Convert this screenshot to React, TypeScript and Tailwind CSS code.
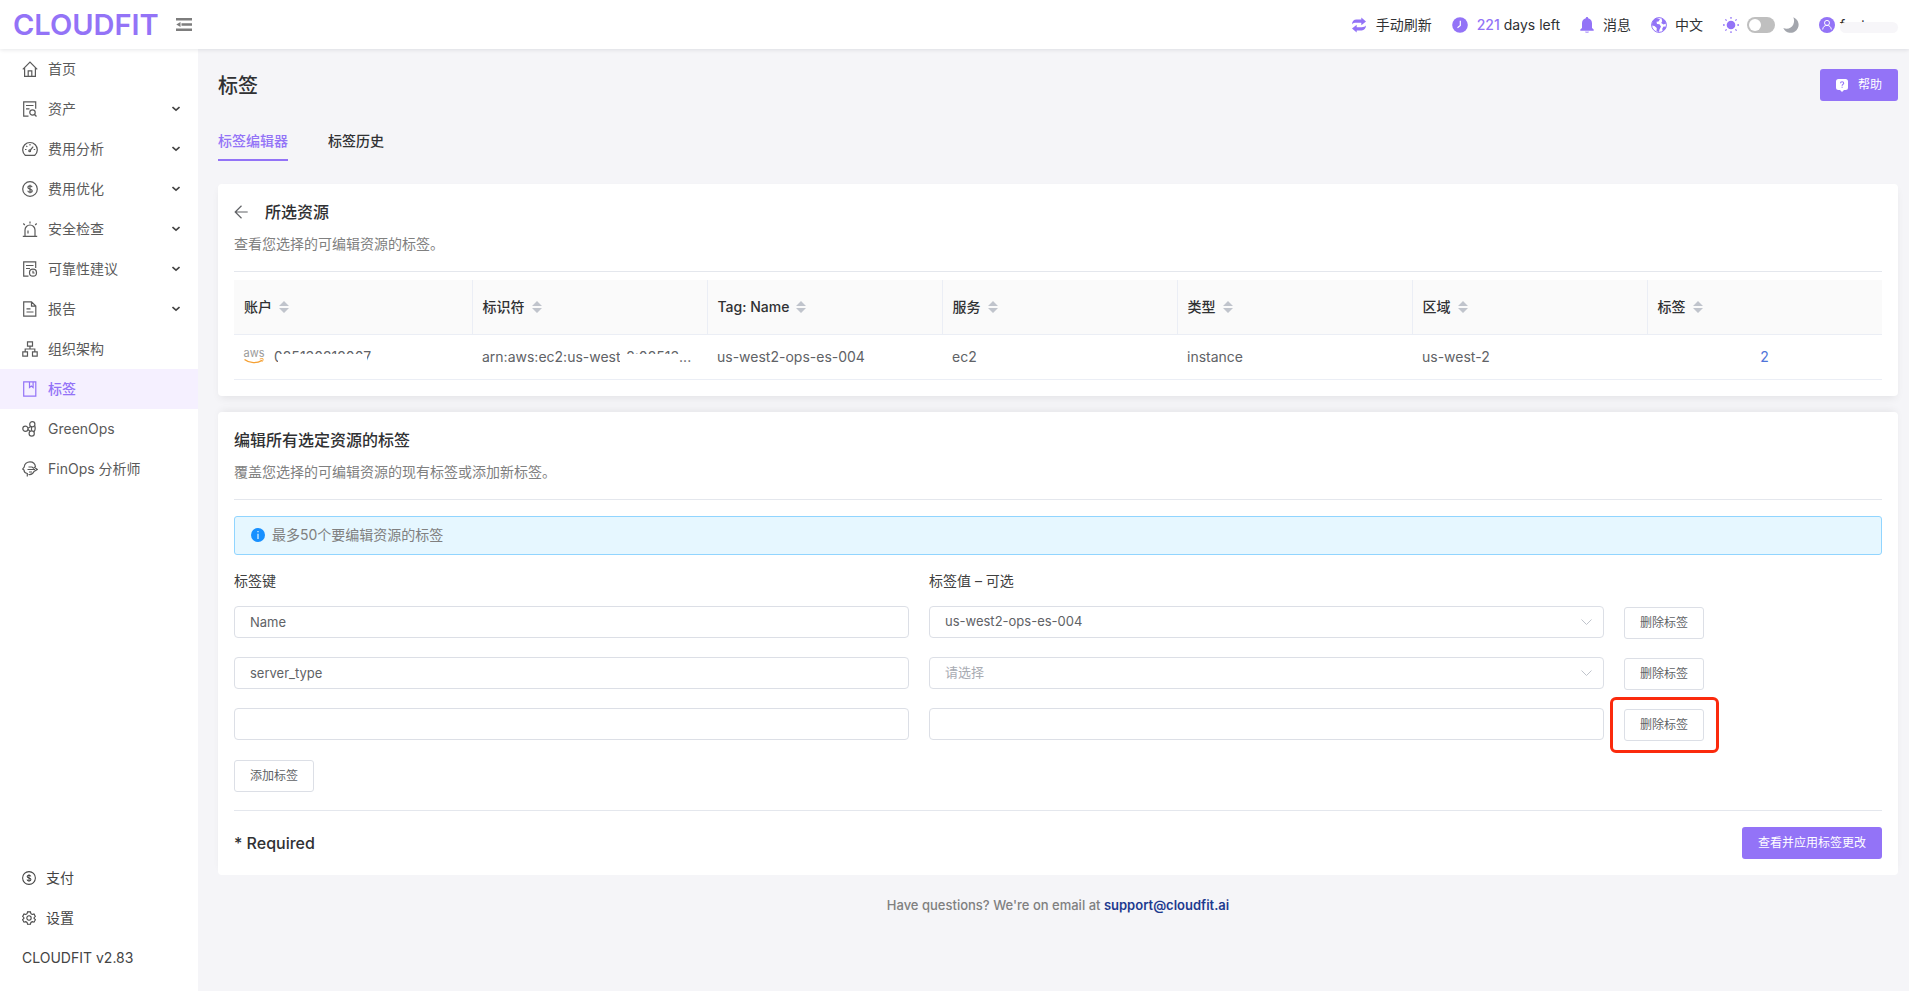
import type { ReactNode } from 'react';

type IconProps = {
  children: ReactNode;
  size?: string;
};

const LineIcon = ({ children, size = 'size-4' }: IconProps) => (
  <svg
    className={`${size} shrink-0`}
    viewBox="0 0 16 16"
    fill="none"
    stroke="currentColor"
    strokeWidth="1.2"
    aria-hidden="true"
  >
    {children}
  </svg>
);

const DollarIcon = ({ size }: { size?: string }) => (
  <LineIcon size={size}>
    <circle cx="8" cy="8" r="7.3" />
    <path d="M10.1 6.2c-.2-.9-1-1.4-2.1-1.4-1.2 0-2.1.6-2.1 1.6 0 2.2 4.3 1.1 4.3 3.3 0 1-.9 1.6-2.2 1.6-1.2 0-2.1-.6-2.2-1.6M8 3.7v8.6" />
  </LineIcon>
);

const HomeIcon = () => (
  <LineIcon>
    <path d="M.8 8.3 8 1l7.2 7.3M2.6 6.8v8.5h10.8V6.8" />
    <path d="M6.2 15.2V9.8h3.6v5.4" />
  </LineIcon>
);

const AssetIcon = () => (
  <LineIcon>
    <path d="M6.5 15.2H1.7V.8h12v7M4 4.5h7.5M4 7.8h3.5" />
    <circle cx="10.5" cy="11.5" r="2.7" />
    <path d="m12.5 13.5 2 2" />
  </LineIcon>
);

const GaugeIcon = () => (
  <LineIcon>
    <path d="M3.2 14.3a7.3 7.3 0 1 1 9.6 0z" />
    <path d="m8.4 9 2.8-3.3M8 3v1.5M3 8.5h1.5M11.7 8.5h1.5M4.3 4.8l1 1" />
    <circle cx="7.7" cy="9.7" r=".9" />
  </LineIcon>
);

const AlarmIcon = () => (
  <LineIcon>
    <path d="M.8 15.3h14.4M3 15V9a5 5 0 0 1 10 0v6M6 12.500V9.500" />
    <path d="M8 .5v2M1.300 2.500 2.800 4M14.700 2.500 13.200 4" />
  </LineIcon>
);

const ReliabilityIcon = () => (
  <LineIcon>
    <path d="M6.500 15.200H1.700V.8h12V7M4 4.500h7.500M4 7.500h4" />
    <circle cx="11" cy="11.700" r="3.500" />
    <path d="M11 9.800v2.200h1.600" />
  </LineIcon>
);

const ReportIcon = () => (
  <LineIcon>
    <path d="M1.700.8h7.800l4.300 4.300v10.100H1.700zM9.500.8v4.300h4.300M4.500 7.800h4M4.500 11h7" />
  </LineIcon>
);

const OrgIcon = () => (
  <LineIcon>
    <path d="M5.500.8h5v4.400h-5zM.8 10.800h4.700v4.400H.8zM10.500 10.800h4.700v4.400h-4.700zM8 5.200V8M3.200 10.800V8h9.600v2.800" />
  </LineIcon>
);

const TagIcon = () => (
  <LineIcon>
    <path d="M1.700.8h12.100v14.400H1.700zM7.500.8v5.700l1.800-1.400 1.800 1.400V.8" />
  </LineIcon>
);

const GreenIcon = () => (
  <LineIcon>
    <circle cx="3.400" cy="7.800" r="2.600" />
    <circle cx="10.300" cy="3.200" r="2.600" />
    <circle cx="9.700" cy="12.500" r="2.600" />
    <path d="M6 7.300 8.700 5.500M6 8.500l2 1.800M12.700 4.500c.8 2.200.7 4.500-.8 6.500M9.500 5.800v4" />
  </LineIcon>
);

const AnalystIcon = () => (
  <LineIcon>
    <path d="M5.300 15.500v-3C3 12 2 10.500 2 9L.7 8l1.500-2C2.500 3 5 .9 8 .9c3.400 0 5.200 2.200 5.500 5.100" />
    <path d="M6.500 13.500c2.500.5 4.500-.8 5.500-3l3.300-2L12 6" />
    <path d="M6.500 6H10l2 1.500M5.500 8.500H13M7 11h3" />
  </LineIcon>
);

const GearIcon = () => (
  <LineIcon size="size-[14px]">
    <path d="m6.300 1-.5 2-1.500.9-2-.6L.7 6.200 2.200 7.600v.9L.7 9.900l1.600 2.900 2-.6 1.500.9.5 2h3.400l.5-2 1.500-.9 2 .6 1.600-2.900-1.500-1.400v-.9l1.500-1.400-1.600-2.900-2 .6-1.500-.9-.5-2z" />
    <circle cx="8" cy="8" r="2.500" />
  </LineIcon>
);

const FoldIcon = () => (
  <svg className="size-4" viewBox="0 0 16 16" fill="#7d7d7d" aria-hidden="true">
    <path d="M0 1h16v2.600H0zM5.500 6.200H16v2.600H5.500zM0 11.400h16V14H0zM.3 7.500 4.500 5v5z" />
  </svg>
);

const RefreshIcon = () => (
  <svg className="size-4" viewBox="0 0 16 16" fill="#9373f7" aria-hidden="true">
    <path d="M1 7.400C1 4.600 3 2.600 5.300 2.600h5V.5L15 4.600 10.300 8.300V5.800h-5C3.500 5.800 2 6.200 1 7.400z" />
    <path d="M15 8.600c0 2.800-2 4.800-4.300 4.800h-5v2.100L1 11.400l4.700-3.700v2.500h5c1.800 0 3.300-.4 4.300-1.600z" />
  </svg>
);

const ClockIcon = () => (
  <svg className="size-4" viewBox="0 0 16 16" aria-hidden="true">
    <circle cx="8" cy="8" r="7.800" fill="#9373f7" />
    <path d="M8.300 3.800v4.700l-2.800 2.200" fill="none" stroke="#fff" strokeWidth="1.200" />
  </svg>
);

const BellIcon = () => (
  <svg className="h-[18px] w-[14px]" viewBox="0 0 14 16" aria-hidden="true">
    <path
      d="M7 0c.7 0 1.200.5 1.200 1.200 2.400.6 3.800 2.600 3.800 5V11l1.700 1.500v1.200H.3v-1.200L2 11V6.200c0-2.400 1.400-4.400 3.800-5C5.800.5 6.300 0 7 0z"
      fill="#9373f7"
    />
    <path d="M5 14.500h4a2 1.500 0 0 1-4 0z" fill="#b9a5fb" />
  </svg>
);

const GlobeIcon = () => (
  <svg className="size-4" viewBox="0 0 16 16" aria-hidden="true">
    <circle cx="8" cy="8" r="7.400" fill="#fff" stroke="#9373f7" />
    <path
      d="M5.500 1 9 2.200 7.500 4.500l-2 .3L6 7l2.500.3L10 9.500l-1.500 3L8 15 5.500 14l.3-3L3.500 9 1 8.500C.8 5 2.500 2 5.500 1zM10.500 1.300l3.500 2 1.200 3.200-2.700 1-2.300-1.500 1-1.700zM12.500 9.500l2.700.2c-.5 2-1.800 3.500-3.500 4.500l-.5-2.500z"
      fill="#9373f7"
    />
  </svg>
);

const SunIcon = () => (
  <svg className="size-4" viewBox="0 0 16 16" aria-hidden="true">
    <circle cx="8" cy="8" r="4.300" fill="#9373f7" />
    <path
      d="M8 0v1.700M8 14.300V16M0 8h1.700M14.300 8H16M2.400 2.400l1.200 1.200M12.400 12.400l1.200 1.200M2.400 13.600l1.200-1.200M12.400 3.600l1.200-1.200"
      stroke="#9373f7"
      strokeWidth="1.300"
    />
  </svg>
);

const MoonIcon = () => (
  <svg className="size-4" viewBox="0 0 16 16" fill="#a3a6ad" aria-hidden="true">
    <path d="M10.300.3a8 8 0 1 1-10 10.800c4.500 1.700 8.500-.3 10-3.700 1.100-2.500 1-5 0-7.100z" />
  </svg>
);

const UserIcon = () => (
  <svg className="size-4" viewBox="0 0 16 16" fill="none" aria-hidden="true">
    <circle cx="8" cy="8" r="8" fill="#9373f7" />
    <circle cx="8" cy="5.900" r="2.500" stroke="#fff" />
    <path d="M3.700 12.500c.2-2.600 1.900-4.100 4.300-4.100s4.100 1.500 4.300 4.100" stroke="#fff" />
  </svg>
);

const HelpIcon = () => (
  <svg className="h-[13px] w-3" viewBox="0 0 12 13" aria-hidden="true">
    <path
      d="M2.500 0h7A2.500 2.500 0 0 1 12 2.500v6A2.500 2.500 0 0 1 9.500 11H8l-2 2-2-2H2.500A2.500 2.500 0 0 1 0 8.500v-6A2.500 2.500 0 0 1 2.500 0z"
      fill="#fff"
    />
    <path
      d="M4.500 4.200c0-2 3.200-2 3.200 0 0 1.100-1.600 1.200-1.600 2.500M6.100 7.700v1.100"
      fill="none"
      stroke="#9373f7"
      strokeWidth="1.100"
    />
  </svg>
);

const InfoIcon = () => (
  <svg className="size-[14px]" viewBox="0 0 14 14" aria-hidden="true">
    <circle cx="7" cy="7" r="7" fill="#1890ff" />
    <path d="M7 3v1.300M7 5.700V11" stroke="#e6f7ff" strokeWidth="1.200" />
  </svg>
);

const AwsIcon = () => (
  <span className="flex w-5 flex-col items-center">
    <span className="text-[11px] leading-[9px] text-[#9b9b9b]">aws</span>
    <svg className="h-[6px] w-5" viewBox="0 0 20 6" fill="none" aria-hidden="true">
      <path d="M.5 1.500c5 4 12.500 4 17.500.8" stroke="#f5a033" strokeWidth="1.400" />
      <path d="M15.800 1c1.400-.5 2.700-.6 3.200-.3.300.8-.2 2-.9 3" stroke="#f5a033" />
    </svg>
  </span>
);

const ChevronIcon = () => (
  <svg className="h-[6px] w-2" viewBox="0 0 8 6" fill="none" aria-hidden="true">
    <path d="m.5 1 3.500 3.200L7.500 1" stroke="#444" strokeWidth="1.600" />
  </svg>
);

const SortIcon = () => (
  <svg className="h-3 w-[10px]" viewBox="0 0 10 12" fill="#c0c4cc" aria-hidden="true">
    <path d="M5 0l5 5H0zM5 12L0 7h10z" />
  </svg>
);

const navItems = [
  { label: '首页', icon: <HomeIcon /> },
  { label: '资产', icon: <AssetIcon />, expandable: true },
  { label: '费用分析', icon: <GaugeIcon />, expandable: true },
  { label: '费用优化', icon: <DollarIcon />, expandable: true },
  { label: '安全检查', icon: <AlarmIcon />, expandable: true },
  { label: '可靠性建议', icon: <ReliabilityIcon />, expandable: true },
  { label: '报告', icon: <ReportIcon />, expandable: true },
  { label: '组织架构', icon: <OrgIcon /> },
  { label: '标签', icon: <TagIcon />, active: true },
  { label: 'GreenOps', icon: <GreenIcon /> },
  { label: 'FinOps 分析师', icon: <AnalystIcon /> },
];

const columns = ['账户', '标识符', 'Tag: Name', '服务', '类型', '区域', '标签'];

const tagRows = [
  { key: 'Name', value: 'us-west2-ops-es-004', select: true },
  { key: 'server_type', value: '', select: true },
  { key: '', value: '', select: false, highlighted: true },
];

const Header = () => (
  <header className="relative z-10 flex h-[49px] items-center justify-between bg-white pr-[11px] pl-[13px] shadow-[0_1px_4px_rgba(0,21,41,0.1)]">
    <div className="flex items-center gap-[17px]">
      <a href="#" className="text-[29px] leading-8 font-semibold text-[#9373f7]">
        CLOUDFIT
      </a>
      <button type="button" aria-label="收起菜单">
        <FoldIcon />
      </button>
    </div>
    <div className="flex items-center gap-5 text-sm text-[#303133]">
      <button type="button" className="flex items-center gap-[9px]">
        <RefreshIcon />
        手动刷新
      </button>
      <span className="flex items-center gap-[9px]">
        <ClockIcon />
        <span>
          <span className="font-medium text-[#9373f7]">221</span> days left
        </span>
      </span>
      <button type="button" className="flex items-center gap-[9px]">
        <BellIcon />
        消息
      </button>
      <button type="button" className="flex items-center gap-2">
        <GlobeIcon />
        中文
      </button>
      <div className="flex items-center gap-2">
        <SunIcon />
        <button
          type="button"
          role="switch"
          aria-checked="false"
          aria-label="深色模式"
          className="flex h-4 w-7 items-center rounded-full bg-[#bfbfbf] px-[2px]"
        >
          <span className="size-3 rounded-full bg-white" />
        </button>
        <MoonIcon />
      </div>
      <button type="button" className="flex items-center gap-[5px]">
        <UserIcon />
        <span className="relative w-[58px] text-left">
          fant
          <span className="absolute inset-x-0 top-[7px] h-[11px] rounded-full bg-[#f7f6f9]" />
        </span>
      </button>
    </div>
  </header>
);

const Sidebar = () => (
  <aside className="flex w-[198px] shrink-0 flex-col justify-between bg-white pb-[13px] text-sm">
    <nav>
      {navItems.map((item) => (
        <a
          key={item.label}
          href="#"
          className={`flex h-10 items-center pr-[18px] pl-[22px] ${
            item.active
              ? 'bg-[#f5f0ff] font-medium text-[#9373f7]'
              : 'text-[#5a5a5a]'
          }`}
        >
          {item.icon}
          <span className="ml-[10px] flex-1">{item.label}</span>
          {item.expandable && <ChevronIcon />}
        </a>
      ))}
    </nav>
    <div className="text-[#444]">
      <a href="#" className="flex h-10 items-center gap-[10px] pl-[22px]">
        <DollarIcon size="size-[14px]" />
        支付
      </a>
      <a href="#" className="flex h-10 items-center gap-[10px] pl-[22px]">
        <GearIcon />
        设置
      </a>
      <p className="flex h-10 items-center pl-[22px]">CLOUDFIT v2.83</p>
    </div>
  </aside>
);

const ResourceCard = () => (
  <section className="mt-[23px] rounded bg-white p-4 shadow-[0_4px_8px_-2px_rgba(0,0,0,0.08)]">
    <div className="flex items-center gap-[17px]">
      <button type="button" aria-label="返回">
        <svg className="size-[14px]" viewBox="0 0 14 14" fill="none" stroke="#606266">
          <path d="M7.500.8 1.200 7l6.300 6.200M1.200 7h12.500" strokeWidth="1.200" />
        </svg>
      </button>
      <h2 className="text-base leading-6 font-medium text-[#303133]">所选资源</h2>
    </div>
    <p className="mt-[10px] text-sm leading-5 text-[#808080]">
      查看您选择的可编辑资源的标签。
    </p>
    <hr className="mt-[17px] border-[#e4e7ed]" />
    <table className="mt-2 w-full table-fixed text-left text-sm">
      <thead className="bg-[#fafafa] text-[#303133]">
        <tr className="h-[54px] border-b border-[#ebeef5]">
          {columns.map((column) => (
            <th
              key={column}
              className="border-r border-[#ebeef5] px-[10px] font-medium first:w-[238px] last:border-r-0"
            >
              <span className="flex items-center gap-[7px]">
                {column}
                <SortIcon />
              </span>
            </th>
          ))}
        </tr>
      </thead>
      <tbody className="text-[#606266]">
        <tr className="h-[45px] border-b border-[#ebeef5]">
          <td className="px-[10px]">
            <span className="flex items-center gap-[10px]">
              <AwsIcon />
              <span className="relative">
                025130212007
                <span className="absolute inset-x-1 top-[7px] h-[8px] bg-white" />
              </span>
            </span>
          </td>
          <td className="px-[10px] whitespace-nowrap">
            arn:aws:ec2:us-west
            <span className="relative">
              -2:02513
              <span className="absolute inset-x-0 top-[6px] h-[10px] bg-white" />
            </span>
            ...
          </td>
          <td className="px-[10px]">us-west2-ops-es-004</td>
          <td className="px-[10px]">ec2</td>
          <td className="px-[10px]">instance</td>
          <td className="px-[10px]">us-west-2</td>
          <td className="px-[10px] text-center">
            <a href="#" className="text-[#4f74d9]">
              2
            </a>
          </td>
        </tr>
      </tbody>
    </table>
  </section>
);

const fieldClass =
  'h-8 w-full rounded border border-[#dcdfe6] bg-white px-[15px] text-[13px] text-[#606266]';

const outlineButtonClass =
  'h-8 rounded-[3px] border border-[#dcdfe6] bg-white px-[15px] text-xs text-[#606266]';

const TagValue = ({ value, select }: { value: string; select: boolean }) => {
  if (!select) {
    return <input aria-label="标签值" defaultValue={value} className={fieldClass} />;
  }
  return (
    <div className="relative">
      <select
        aria-label="标签值"
        defaultValue={value}
        className={`${fieldClass} appearance-none ${value ? '' : 'text-[#a8abb2]!'}`}
      >
        <option value={value}>{value || '请选择'}</option>
      </select>
      <svg
        className="pointer-events-none absolute top-[13px] right-3 h-[6px] w-[11px]"
        viewBox="0 0 11 6"
        fill="none"
        aria-hidden="true"
      >
        <path d="m.5.500 5 5 5-5" stroke="#c0c4cc" />
      </svg>
    </div>
  );
};

const EditCard = () => (
  <section className="mt-4 rounded bg-white p-4 shadow-[0_-4px_8px_-3px_rgba(0,0,0,0.08)]">
    <h2 className="text-base leading-6 font-medium text-[#303133]">
      编辑所有选定资源的标签
    </h2>
    <p className="mt-[10px] text-sm leading-5 text-[#808080]">
      覆盖您选择的可编辑资源的现有标签或添加新标签。
    </p>
    <hr className="mt-[17px] border-[#e4e7ed]" />
    <div className="mt-4 flex h-[39px] items-center gap-[7px] rounded-[3px] border border-[#91d5ff] bg-[#e6f7ff] px-4 text-sm text-[#808080]">
      <InfoIcon />
      最多50个要编辑资源的标签
    </div>
    <div className="mt-4 -mr-5 flex text-sm leading-5 text-[#404040]">
      <span className="w-5/12 pr-5">标签键</span>
      <span className="w-5/12 pr-5">标签值 – 可选</span>
    </div>
    <div className="mt-[15px] flex flex-col gap-[18px]">
      {tagRows.map((row) => (
        <div key={row.key} className="-mr-5 flex">
          <div className="w-5/12 pr-5">
            <input aria-label="标签键" defaultValue={row.key} className={fieldClass} />
          </div>
          <div className="w-5/12 pr-5">
            <TagValue value={row.value} select={row.select} />
          </div>
          <div className="relative pt-px">
            <button type="button" className={outlineButtonClass}>
              删除标签
            </button>
            {row.highlighted && (
              <span className="pointer-events-none absolute -top-[11px] -right-[15px] -bottom-[12px] -left-[14px] rounded-md border-[3px] border-[#fb2a0d]" />
            )}
          </div>
        </div>
      ))}
    </div>
    <button type="button" className={`mt-[19px] block ${outlineButtonClass}`}>
      添加标签
    </button>
    <hr className="mt-[18px] border-[#e4e7ed]" />
    <div className="mt-4 flex items-center justify-between">
      <span className="text-base font-medium text-[#303133]">* Required</span>
      <button
        type="button"
        className="h-8 rounded-[3px] bg-[#9373f7] px-4 text-xs text-white"
      >
        查看并应用标签更改
      </button>
    </div>
  </section>
);

const App = () => (
  <div className="flex min-h-screen flex-col font-[Inter,'Noto_Sans_CJK_SC',sans-serif]">
    <Header />
    <div className="flex flex-1">
      <Sidebar />
      <main className="min-w-0 flex-1 bg-[#f5f5f8] pt-5 pr-[11px] pl-5">
        <div className="flex items-center justify-between">
          <h1 className="pt-[2px] text-xl font-medium text-[#303133]">标签</h1>
          <button
            type="button"
            className="flex h-8 items-center gap-[10px] rounded-[3px] bg-[#9373f7] px-4 text-xs text-white"
          >
            <HelpIcon />
            帮助
          </button>
        </div>
        <div className="mt-5 flex gap-10 text-sm font-medium text-[#303133]">
          <button
            type="button"
            className="h-10 border-b-2 border-[#9373f7] pt-[2px] text-[#9373f7]"
          >
            标签编辑器
          </button>
          <button
            type="button"
            className="h-10 border-b-2 border-transparent pt-[2px]"
          >
            标签历史
          </button>
        </div>
        <ResourceCard />
        <EditCard />
        <footer className="mt-5 text-center text-[13px] leading-5 font-medium text-[#808080]">
          Have questions? We're on email at{' '}
          <a
            href="mailto:support@cloudfit.ai"
            className="font-semibold text-[#1d3a8f]"
          >
            support@cloudfit.ai
          </a>
        </footer>
      </main>
    </div>
  </div>
);

export default App;
